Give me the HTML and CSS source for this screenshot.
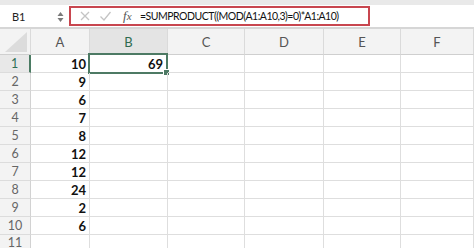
FILE: index.html
```html
<!DOCTYPE html>
<html>
<head>
<meta charset="utf-8">
<link rel="stylesheet" href="styles.css">
</head>
<body>
<div class="app">
  <div class="topstrip"></div>
  <div class="fbar">
    <div class="namebox">
      <span class="nb-text">B1</span>
      <svg class="spin" width="7" height="12" viewBox="0 0 7 12"><path d="M3.5 1 L6.5 5 L0.5 5 Z" fill="#7a7a7a"/><path d="M3.5 11 L6.5 7 L0.5 7 Z" fill="#7a7a7a"/></svg>
    </div>
    <div class="finput">
      <div class="hl">
        <svg class="ic" width="12" height="12" viewBox="0 0 12 12"><path d="M2 2 L10 10 M10 2 L2 10" stroke="#c4c4c4" stroke-width="1.3"/></svg>
        <svg class="ic chk" width="13" height="12" viewBox="0 0 13 12"><path d="M1.5 6.5 L5 10 L11.5 2" stroke="#c4c4c4" stroke-width="1.3" fill="none"/></svg>
        <span class="fx"><i>f</i><i class="x">x</i></span>
        <span class="formula">=SUMPRODUCT((MOD(A1:A10,3)=0)*A1:A10)</span>
      </div>
    </div>
  </div>
  <div class="sheet">
    <div class="hc corner"><svg width="22" height="20" viewBox="0 0 22 20"><path d="M22 0 L22 20 L0 20 Z" fill="#dcdcdc"/></svg></div>
    <div class="hc">A</div>
    <div class="hc sel">B</div>
    <div class="hc">C</div>
    <div class="hc">D</div>
    <div class="hc">E</div>
    <div class="hc">F</div>

    <div class="rh act">1</div><div class="c v">10</div><div class="c v b1">69<span class="selbox"><span class="handle"></span></span></div><div class="c"></div><div class="c"></div><div class="c"></div><div class="c"></div>
    <div class="rh">2</div><div class="c v">9</div><div class="c"></div><div class="c"></div><div class="c"></div><div class="c"></div><div class="c"></div>
    <div class="rh">3</div><div class="c v">6</div><div class="c"></div><div class="c"></div><div class="c"></div><div class="c"></div><div class="c"></div>
    <div class="rh">4</div><div class="c v">7</div><div class="c"></div><div class="c"></div><div class="c"></div><div class="c"></div><div class="c"></div>
    <div class="rh">5</div><div class="c v">8</div><div class="c"></div><div class="c"></div><div class="c"></div><div class="c"></div><div class="c"></div>
    <div class="rh">6</div><div class="c v">12</div><div class="c"></div><div class="c"></div><div class="c"></div><div class="c"></div><div class="c"></div>
    <div class="rh">7</div><div class="c v">12</div><div class="c"></div><div class="c"></div><div class="c"></div><div class="c"></div><div class="c"></div>
    <div class="rh">8</div><div class="c v">24</div><div class="c"></div><div class="c"></div><div class="c"></div><div class="c"></div><div class="c"></div>
    <div class="rh">9</div><div class="c v">2</div><div class="c"></div><div class="c"></div><div class="c"></div><div class="c"></div><div class="c"></div>
    <div class="rh">10</div><div class="c v">6</div><div class="c"></div><div class="c"></div><div class="c"></div><div class="c"></div><div class="c"></div>
    <div class="rh last">11</div><div class="c"></div><div class="c"></div><div class="c"></div><div class="c"></div><div class="c"></div><div class="c"></div>
  </div>
</div>
</body>
</html>
```

FILE: styles.css
```css
html, body { margin: 0; padding: 0; background: #fff; }
body { width: 474px; height: 248px; overflow: hidden; font-family: Lato, "Liberation Sans", sans-serif; }
.app { display: flex; flex-direction: column; }
.topstrip { height: 5px; background: #e9e9e9; }
.fbar { height: 22px; display: flex; background: #fff; border-bottom: 2px solid #d6d6d6; }
.namebox { width: 69px; display: flex; align-items: center; justify-content: space-between; padding: 0 5px 0 12px; box-sizing: border-box; }
.nb-text { font-size: 11px; color: #222; }
.spin { margin-top: 1px; }
.finput { flex: 1; display: flex; align-items: center; }
.hl { width: 301px; height: 20px; box-sizing: border-box; border: 2px solid #c8464f; display: flex; align-items: center; padding-left: 8px; }
.ic { flex: none; }
.chk { margin-left: 8px; }
.fx { margin-left: 11px; font-family: "Liberation Serif", serif; font-size: 13px; color: #555; width: 14px; }
.fx .x { font-size: 11px; }
.formula { margin-left: 3px; font-size: 10.5px; letter-spacing: -0.5px; color: #111; white-space: nowrap; }

.sheet { display: grid; grid-template-columns: 31px 59px 78px 77px 79px 77px 1fr; grid-template-rows: 26px repeat(10, 18px) 14px; }
.hc { background: #f3f3f3; border-right: 1px solid #dadada; border-bottom: 1px solid #cfcfcf; display: flex; align-items: center; justify-content: center; font-size: 13px; color: #555; }
.hc.sel { background: #e4e4e4; color: #2f6b50; border-bottom: 1px solid #9fb8ab; }
.corner { justify-content: flex-end; align-items: flex-end; padding: 0 3px 2px 0; }
.rh { background: #f3f3f3; border-right: 1px solid #d2d2d2; border-bottom: 1px solid #dcdcdc; display: flex; align-items: center; justify-content: center; font-size: 12.5px; color: #666; }
.rh.last { align-items: flex-start; line-height: 14px; padding-top: 1px; }
.rh.act { color: #2f7056; border-right: 2px solid #4b7b63; background: #e8e8e8; }
.c { border-right: 1px solid #dedede; border-bottom: 1px solid #dedede; display: flex; align-items: center; justify-content: flex-end; padding-right: 3px; font-size: 13px; color: #111; font-weight: 700; position: relative; }
.b1 { padding-right: 4px; }
.selbox { position: absolute; left: -2px; top: -2px; right: -1px; bottom: -2px; border: 2px solid #4d7a64; }
.handle { position: absolute; right: -4px; bottom: -4px; width: 5px; height: 5px; background: #4d7a64; border: 1px solid #fff; }
```
